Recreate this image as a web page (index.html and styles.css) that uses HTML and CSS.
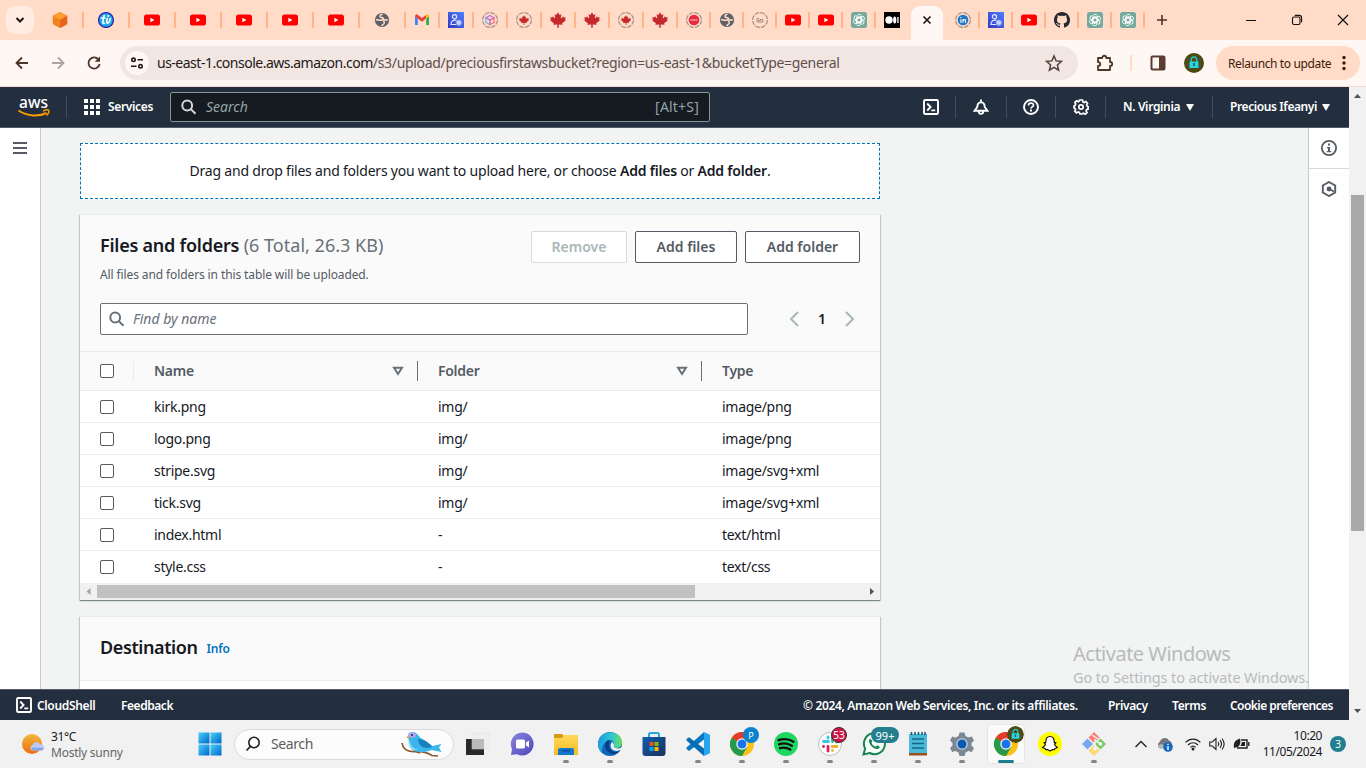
FILE: index.html
```
<!DOCTYPE html>
<html lang="en">
<head>
<meta charset="utf-8">
<title>Upload objects</title>
<link rel="stylesheet" href="styles.css">
</head>
<body>
<svg class="defs" width="0" height="0">
<defs>
<linearGradient id="gBlue" x1="0" y1="0" x2="1" y2="1"><stop offset="0" stop-color="#48d0fb"/><stop offset="1" stop-color="#0067c8"/></linearGradient>
<linearGradient id="gUser" x1="0" y1="1" x2="1" y2="0"><stop offset="0" stop-color="#3239c4"/><stop offset="1" stop-color="#5080ff"/></linearGradient>
<linearGradient id="gSun" x1="0" y1="0" x2="0" y2="1"><stop offset="0" stop-color="#f2b93b"/><stop offset="1" stop-color="#ee6a13"/></linearGradient>
<linearGradient id="gPurple" x1="0" y1="0" x2="1" y2="1"><stop offset="0" stop-color="#8a84de"/><stop offset="1" stop-color="#4d47b8"/></linearGradient>
<linearGradient id="gEdge" x1="0" y1="0" x2="1" y2="0"><stop offset="0" stop-color="#1b9de2"/><stop offset=".6" stop-color="#33c6cf"/><stop offset="1" stop-color="#6fe04a"/></linearGradient>
<linearGradient id="gFolder" x1="0" y1="0" x2="0" y2="1"><stop offset="0" stop-color="#ffd95c"/><stop offset="1" stop-color="#f7ba26"/></linearGradient>
<linearGradient id="gStore" x1="0" y1="0" x2="1" y2="1"><stop offset="0" stop-color="#0f5fae"/><stop offset="1" stop-color="#1c2f5c"/></linearGradient>
<symbol id="yt" viewBox="0 0 16 16"><rect y="2.500" width="16" height="11" rx="2.600" fill="#f00"/><path d="M6.400 5.700v4.600L10.400 8z" fill="#fff"/></symbol>
<symbol id="cube" viewBox="0 0 16 16"><path d="M8 0l7.200 3.800v8.400L8 16 .8 12.200V3.800z" fill="#f58220"/><path d="M8 0l7.200 3.800L8 7.800.8 3.800z" fill="#ff9d2e"/><path d="M8 7.800l7.200-4v8.400L8 16z" fill="#e8641b"/></symbol>
<symbol id="tl" viewBox="0 0 16 16"><circle cx="8" cy="8" r="7.400" fill="#20a8e8" stroke="#2a27b5" stroke-width="1.300"/><path d="M6.200 3.500L4.800 10q-.2 1.800 1.500 1.200M3.200 6h3.800M9.300 6.500L8.600 9.800q0 1.700 1.400 1.200 1.800-.8 2.300-4.500" fill="none" stroke="#fff" stroke-width="1.600" stroke-linecap="round"/><circle cx="10.200" cy="4" r="1" fill="#fff"/></symbol>
<symbol id="globe" viewBox="0 0 16 16"><circle cx="8" cy="8" r="7.100" fill="#5f6368"/><path d="M8.500 2.300C6.200 2.800 5.500 4 6.300 5c.9.900 3 .4 3.200 1.700.1 1.300-1.500 1.400-3.100 1.500-1.700.1-2.300-.7-4.300-.3" fill="none" stroke="#ffdbc8" stroke-width="1.600"/><path d="M13.800 8.200c-1.300-.6-3.200-.5-3.900.4-.6 1 .7 1.500.3 2.600-.4.900-1.600 1.500-2.700 2.500" fill="none" stroke="#ffdbc8" stroke-width="1.500"/></symbol>
<symbol id="gmail" viewBox="0 0 16 16"><path d="M1 3.500v9.500h2.800V6.500z" fill="#4285f4"/><path d="M15 3.500v9.500h-2.800V6.500z" fill="#34a853"/><path d="M1 4.500C1 2.500 3 2.200 4 3l4 3 4-3v3.500L8 9.700 3.800 6.600z" fill="#ea4335"/><path d="M12.200 3c1.300-.9 2.800-.2 2.800 1.500l-2.800 2.300z" fill="#fbbc04"/></symbol>
<symbol id="user" viewBox="0 0 16 16"><path fill="url(#gUser)" d="M0 0h16v16H0z"/><circle cx="6.500" cy="4.700" r="2.100" fill="none" stroke="#e1e6ff" stroke-width="1.200"/><path d="M8.500 8.500c-3-1-5.500.5-5.500 4h5" fill="none" stroke="#e1e6ff" stroke-width="1.200"/><circle cx="10.800" cy="10.700" r="2.700" fill="#c8d2ff" stroke="#8c9cf5"/></symbol>
<symbol id="ring" viewBox="0 0 16 16"><circle cx="8" cy="8" r="7.400" fill="none" stroke="#a79184" stroke-width="1.200" stroke-dasharray="4.700 1.110"/></symbol>
<symbol id="leaf" viewBox="0 0 16 16"><path d="M8 .3L9.600 3l1.800-.8-.7 3.800.6.200 1.800-1.900.6 1.300 2.200-.3-.9 2.300.9.700-3.700 3 .4 1.500-3.900-.4.100 3.300H7.200l.1-3.300-3.900.4.400-1.500L.1 8.300 1 7.600.1 5.300l2.200.3.600-1.300 1.800 1.900.600-.2-.7-3.800L6.400 3z" fill="#c5282b"/></symbol>
<symbol id="gpt" viewBox="0 0 16 16"><rect width="16" height="16" rx="2.500" fill="#74aa9c"/><g fill="none" stroke="#fff" stroke-width=".9"><path id="petal" d="M6 9.300V4.700a2.400 2.400 0 014.400-1.300M6.200 4.200l4.200 2.500v3.800"/><use href="#petal" transform="rotate(60 8 8)"/><use href="#petal" transform="rotate(120 8 8)"/><use href="#petal" transform="rotate(180 8 8)"/><use href="#petal" transform="rotate(240 8 8)"/><use href="#petal" transform="rotate(300 8 8)"/></g></symbol>
<symbol id="medium" viewBox="0 0 16 16"><path d="M0 0h16v16H0z"/><circle cx="5" cy="8" r="3.700" fill="#fff"/><ellipse cx="10.700" cy="8" rx="1.600" ry="3.500" fill="#fff"/><path d="M13.300 5h1.300v6h-1.300z" fill="#fff"/></symbol>
<symbol id="github" viewBox="0 0 16 16"><path fill="#24292f" d="M8 0C3.580 0 0 3.580 0 8c0 3.540 2.290 6.530 5.470 7.590.4.070.55-.17.55-.38 0-.19-.01-.82-.01-1.490-2.010.37-2.530-.49-2.690-.94-.09-.23-.48-.94-.82-1.130-.28-.15-.68-.52-.01-.53.63-.01 1.080.58 1.230.82.72 1.210 1.870.87 2.330.66.07-.52.28-.87.51-1.070-1.780-.2-3.640-.89-3.640-3.950 0-.87.31-1.590.82-2.150-.08-.2-.36-1.020.08-2.120 0 0 .67-.21 2.200.82.640-.18 1.320-.27 2-.27s1.360.09 2 .27c1.530-1.040 2.200-.82 2.200-.82.44 1.100.16 1.920.08 2.120.51.56.82 1.270.82 2.150 0 3.070-1.870 3.750-3.650 3.950.29.25.54.73.54 1.480 0 1.070-.01 1.930-.01 2.200 0 .21.15.46.55.38A8.010 8.010 0 0016 8c0-4.420-3.580-8-8-8z"/></symbol>
<symbol id="shell" viewBox="0 0 16 16"><g fill="none" stroke="#fff" stroke-width="1.900"><rect x="1" y="1" width="14" height="14" rx="1.300"/><path d="M4.200 4.500L7.600 8l-3.400 3.500M8.300 11.400h3.900" stroke-width="1.800"/></g></symbol>
<symbol id="mag" viewBox="0 0 16 16"><g fill="none" stroke="currentColor" stroke-width="2"><circle cx="6.200" cy="6.500" r="4.900"/><path d="M9.800 10.100L14.500 14.800"/></g></symbol>
<symbol id="chrome" viewBox="0 0 24 24"><circle cx="12" cy="12" r="12" fill="#fbc116"/><path d="M12 12L1.600 6A12 12 0 0122.400 6z" fill="#e33b2e"/><path d="M1.600 6A12 12 0 0012 24l5.200-9L12 12z" fill="#269a4a"/><path d="M12 6.500h10.700L12 12z" fill="#e33b2e"/><path d="M1.600 6l5.600 9 4.800-3z" fill="#269a4a"/><circle cx="12" cy="12" r="5.700" fill="#fff"/><circle cx="12" cy="12" r="4.500" fill="#1a73e8"/></symbol>
<symbol id="lock" viewBox="0 0 20 20"><circle cx="10" cy="10" r="10" fill="#4d4a0c"/><path d="M3 5l2 2M2 11l2 1M15 5l2 2M15 14l2-2M5 16h2" stroke="#4b477f" stroke-width="1.500"/><path d="M7.300 9V6.700a2.700 2.700 0 015.400 0V9" fill="none" stroke="#21c3cf" stroke-width="1.400"/><path d="M5.500 8.500h9V15h-9z" fill="#25d7e2"/><path d="M9.200 10h1.600v3H9.200z" fill="#33533e"/></symbol>
</defs>
</svg>

<header class="tabstrip">
  <div class="tabsearch"><svg width="10" height="8" viewBox="0 0 10 8"><path d="M1.500 2L5 5.500 8.500 2" fill="none" stroke="#241712" stroke-width="2"/></svg></div>
  <div class="tab wide"><svg><use href="#cube"/></svg></div>
  <div class="tab wide"><svg><use href="#tl"/></svg></div>
  <div class="tab wide"><svg><use href="#yt"/></svg></div>
  <div class="tab wide"><svg><use href="#yt"/></svg></div>
  <div class="tab wide"><svg><use href="#yt"/></svg></div>
  <div class="tab wide"><svg><use href="#yt"/></svg></div>
  <div class="tab wide"><svg><use href="#yt"/></svg></div>
  <div class="tab wide"><svg><use href="#globe"/></svg></div>
  <div class="tab mid"><svg><use href="#gmail"/></svg></div>
  <div class="tab mid"><svg><use href="#user"/></svg></div>
  <div class="tab mid"><svg viewBox="0 0 16 16"><use href="#ring"/><g fill="none" stroke-width="1.200"><path d="M8 8L4 5.800v4.600l4 2.300z" stroke="#62b7ef"/><path d="M8 3.500l4 2.300L8 8 4 5.800z" stroke="#ae78e5"/><path d="M8 8l4-2.200v4.600l-4 2.300z" stroke="#f1698e"/></g></svg></div>
  <div class="tab mid"><svg viewBox="0 0 16 16"><use href="#ring"/><use href="#leaf" x="3" y="3" width="10" height="10"/></svg></div>
  <div class="tab mid"><svg><use href="#leaf"/></svg></div>
  <div class="tab mid"><svg><use href="#leaf"/></svg></div>
  <div class="tab mid"><svg viewBox="0 0 16 16"><use href="#ring"/><use href="#leaf" x="3" y="3" width="10" height="10"/></svg></div>
  <div class="tab mid"><svg><use href="#leaf"/></svg></div>
  <div class="tab"><svg viewBox="0 0 16 16"><use href="#ring"/><circle cx="8" cy="8" r="5.300" fill="#e52b3d"/><path d="M4.500 8h7" stroke="#f9c2c5" stroke-width="1.700" stroke-dasharray="1.200 .5"/></svg></div>
  <div class="tab"><svg><use href="#globe"/></svg></div>
  <div class="tab"><svg viewBox="0 0 16 16"><use href="#ring"/><path d="M5 6.500h2l1 1h3v2.500H5zM6 8.500h3" fill="none" stroke="#a79184"/></svg></div>
  <div class="tab"><svg><use href="#yt"/></svg></div>
  <div class="tab"><svg><use href="#yt"/></svg></div>
  <div class="tab"><svg><use href="#gpt"/></svg></div>
  <div class="tab last"><svg><use href="#medium"/></svg></div>
  <div class="tab active"><svg viewBox="0 0 16 16"><path d="M4.500 4.500l7 7M11.500 4.500l-7 7" stroke="#241712" stroke-width="1.700"/></svg></div>
  <div class="tab"><svg viewBox="0 0 16 16"><use href="#ring"/><circle cx="8" cy="8" r="5.300" fill="#2078c8"/><path d="M5.900 7.200v3.500M8 10.700V7.200M8 8.800c.2-1.600 2.600-1.700 2.600.3v1.600" stroke="#fff" stroke-width="1.100" fill="none"/><circle cx="5.900" cy="5.600" r=".7" fill="#fff"/></svg></div>
  <div class="tab"><svg><use href="#user"/></svg></div>
  <div class="tab"><svg><use href="#yt"/></svg></div>
  <div class="tab"><svg><use href="#github"/></svg></div>
  <div class="tab"><svg><use href="#gpt"/></svg></div>
  <div class="tab"><svg><use href="#gpt"/></svg></div>
  <div class="newtab"><svg width="12" height="12" viewBox="0 0 12 12"><path d="M6 1v10M1 6h10" stroke="#4f3529" stroke-width="1.600"/></svg></div>
  <div class="winbtns">
    <svg width="12" height="12" viewBox="0 0 12 12"><path d="M1 6.500h10" stroke="#111"/></svg>
    <svg width="12" height="12" viewBox="0 0 12 12"><rect x="1.500" y="3" width="7.500" height="7.500" rx="1.500" fill="none" stroke="#111" stroke-width="1.100"/><path d="M3.800 1.400h4.400c1.500 0 2.400.9 2.400 2.400v4.400" fill="none" stroke="#111" stroke-width="1.100"/></svg>
    <svg width="12" height="12" viewBox="0 0 12 12"><path d="M1 1l10 10M11 1L1 11" stroke="#111" stroke-width="1.200"/></svg>
  </div>
</header>

<div class="toolbar">
  <div class="nav">
    <svg width="16" height="16" viewBox="0 0 16 16"><path d="M14 8H3M8 2.500L2.500 8 8 13.500" fill="none" stroke="#4f3529" stroke-width="1.800"/></svg>
    <svg width="16" height="16" viewBox="0 0 16 16"><path d="M2 8h11M8 2.500L13.500 8 8 13.500" fill="none" stroke="#b0a29c" stroke-width="1.800"/></svg>
    <svg width="16" height="16" viewBox="0 0 16 16"><path d="M12.800 5A5.600 5.600 0 1013.600 9" fill="none" stroke="#4f3529" stroke-width="1.800"/><path d="M14 1.500v5.300H8.700z" fill="#4f3529"/></svg>
  </div>
  <div class="omnibox">
    <span class="tune"><svg width="14" height="14" viewBox="0 0 14 14"><g fill="none" stroke="#241712" stroke-width="1.600"><circle cx="3.500" cy="3.800" r="1.700"/><path d="M7.500 3.800H13M1 10.200h5.500"/><circle cx="10.500" cy="10.200" r="1.700"/></g></svg></span>
    <span class="url"><b>us-east-1.console.aws.amazon.com</b><i>/s3/upload/preciousfirstawsbucket?region=us-east-1&amp;bucketType=general</i></span>
    <svg width="18" height="18" viewBox="0 0 18 18"><path d="M9 2l2.100 4.900 5.300.5-4 3.500 1.200 5.200L9 13.400l-4.600 2.700 1.200-5.200-4-3.500 5.300-.5z" fill="none" stroke="#51413a" stroke-width="1.500"/></svg>
  </div>
  <svg class="ext" width="18" height="18" viewBox="0 0 18 18"><path d="M2 4h4.200c0-3 4-3 4 0H14v4c3 0 3 4 0 4v4H2v-4c3 0 3-4 0-4z" fill="none" stroke="#4f3529" stroke-width="1.800" stroke-linejoin="round"/></svg>
  <span class="tsep"></span>
  <svg class="panel" width="16" height="16" viewBox="0 0 16 16"><rect x="1.500" y="1.500" width="13" height="13" rx="1" fill="none" stroke="#5a3d2f" stroke-width="2"/><path d="M9 1h6v14H9z" fill="#5a3d2f"/></svg>
  <svg class="avatar" width="20" height="20"><use href="#lock"/></svg>
  <div class="relaunch"><span>Relaunch to update</span><svg width="4" height="16" viewBox="0 0 4 16"><g fill="#3b1a0c"><circle cx="2" cy="2.500" r="1.700"/><circle cx="2" cy="8" r="1.700"/><circle cx="2" cy="13.500" r="1.700"/></g></svg></div>
</div>

<div class="viewport">
<div class="page">
  <nav class="awsnav">
    <svg class="awslogo" width="32" height="24" viewBox="0 0 32 24"><text x="1" y="13" class="awstext" textLength="29" lengthAdjust="spacingAndGlyphs">aws</text><path d="M.5 15.500c9 6 20 6.500 28 2.500" fill="none" stroke="#f90" stroke-width="2"/><path d="M25 16.200c3-1.500 5.200-1.500 5.700-.7.500 1-.5 3.300-2 5" fill="none" stroke="#f90" stroke-width="1.500"/></svg>
    <span class="vsep s1"></span>
    <svg class="grid" width="16" height="16" viewBox="0 0 16 16"><path fill="#fff" d="M0 0h4v4H0zM6 0h4v4H6zM12 0h4v4h-4zM0 6h4v4H0zM6 6h4v4H6zM12 6h4v4h-4zM0 12h4v4H0zM6 12h4v4H6zM12 12h4v4h-4z"/></svg>
    <span class="services">Services</span>
    <div class="gsearch"><svg width="16" height="16"><use href="#mag"/></svg><em>Search</em><span>[Alt+S]</span></div>
    <div class="tools">
      <div class="tool"><svg width="16" height="16"><use href="#shell"/></svg></div>
      <div class="tool w51"><svg width="16" height="16" viewBox="0 0 16 16"><path d="M8 .5V3M4.300 8C4.300 1.800 11.700 1.800 11.700 8L14.500 11.800h-13zM5.700 12.500c.3 3.200 4.300 3.200 4.600 0" fill="none" stroke="#fff" stroke-width="1.900"/></svg></div>
      <div class="tool w49"><svg width="16" height="16" viewBox="0 0 16 16"><circle cx="8" cy="8" r="7" fill="none" stroke="#fff" stroke-width="1.900"/><path d="M5.500 6.400c0-3 5-3 5-.2 0 1.700-2.500 1.700-2.500 3.300" fill="none" stroke="#fff" stroke-width="1.700"/><path d="M7 10.600h2v1.800H7z" fill="#fff"/></svg></div>
      <div class="tool"><svg width="16" height="16" viewBox="0 0 16 16"><circle cx="8" cy="8" r="2.200" fill="none" stroke="#fff" stroke-width="1.700"/><path d="M6.500 1h3l.4 1.900 1.300.6 1.700-1 1.600 1.800-.9 1.600.5 1.300 1 .4v2.500l-1.500.6-.5 1.300.9 1.500-1.800 1.800-1.600-1-1.300.5L9.100 15H6.900l-.5-1.600-1.300-.5-1.600 1-1.800-1.800.9-1.500-.5-1.300L1 8.900V7l1.200-.7.500-1.300-.9-1.600 1.700-1.600 1.600 1 1-.6z" fill="none" stroke="#fff" stroke-width="1.700"/></svg></div>
      <div class="tool region"><span>N. Virginia</span><i class="caret"></i></div>
      <div class="tool account"><span>Precious Ifeanyi</span><i class="caret"></i></div>
    </div>
  </nav>
  <div class="body">
    <aside class="left"><svg width="14" height="12" viewBox="0 0 14 12"><path d="M0 1h14M0 6h14M0 11h14" stroke="#545b64" stroke-width="2"/></svg></aside>
    <main class="content">
      <div class="drop"><p>Drag and drop files and folders you want to upload here, or choose <b>Add files</b> or <b>Add folder</b>.</p></div>
      <section class="card files">
        <div class="cardhead">
          <div class="toprow">
            <div class="titles"><h2>Files and folders <span>(6 Total, 26.3 KB)</span></h2><p>All files and folders in this table will be uploaded.</p></div>
            <div class="btns"><button class="off">Remove</button><button class="af">Add files</button><button class="ad">Add folder</button></div>
          </div>
          <div class="findrow">
            <div class="find"><svg width="16" height="16"><use href="#mag"/></svg><em>Find by name</em></div>
            <div class="pager"><svg width="10" height="16" viewBox="0 0 10 16"><path d="M9 1L2 8l7 7" fill="none" stroke="#aab7b8" stroke-width="2"/></svg><b>1</b><svg width="10" height="16" viewBox="0 0 10 16"><path d="M1 1l7 7-7 7" fill="none" stroke="#aab7b8" stroke-width="2"/></svg></div>
          </div>
        </div>
        <div class="row th"><div class="ck"><i></i></div><div class="c1">Name<svg width="12" height="10" viewBox="0 0 12 10"><path d="M2 1.800h8L6 8z" fill="none" stroke="#687078" stroke-width="2"/></svg></div><div class="c2">Folder<svg width="12" height="10" viewBox="0 0 12 10"><path d="M2 1.800h8L6 8z" fill="none" stroke="#687078" stroke-width="2"/></svg></div><div class="c3">Type</div></div>
        <div class="row"><div class="ck"><i></i></div><div class="c1">kirk.png</div><div class="c2">img/</div><div class="c3">image/png</div></div>
        <div class="row"><div class="ck"><i></i></div><div class="c1">logo.png</div><div class="c2">img/</div><div class="c3">image/png</div></div>
        <div class="row"><div class="ck"><i></i></div><div class="c1">stripe.svg</div><div class="c2">img/</div><div class="c3">image/svg+xml</div></div>
        <div class="row"><div class="ck"><i></i></div><div class="c1">tick.svg</div><div class="c2">img/</div><div class="c3">image/svg+xml</div></div>
        <div class="row"><div class="ck"><i></i></div><div class="c1">index.html</div><div class="c2">-</div><div class="c3">text/html</div></div>
        <div class="row end"><div class="ck"><i></i></div><div class="c1">style.css</div><div class="c2">-</div><div class="c3">text/css</div></div>
        <div class="hscroll"><svg width="17" height="17" viewBox="0 0 17 17"><path d="M10.500 5v7L6.500 8.500z" fill="#a3a3a3"/></svg><i></i><svg width="17" height="17" viewBox="0 0 17 17"><path d="M7 5v7l4-3.500z" fill="#505050"/></svg></div>
      </section>
      <section class="card dest"><div class="desthead"><h2>Destination</h2><a>Info</a></div></section>
      <div class="watermark"><strong>Activate Windows</strong><span>Go to Settings to activate Windows.</span></div>
    </main>
    <aside class="right">
      <div><svg width="16" height="16" viewBox="0 0 16 16"><circle cx="8" cy="8" r="7.100" fill="none" stroke="#545b64" stroke-width="1.800"/><path d="M7 3.500h2v2H7zM6 7h3v4h1.200v1.200H5.800V11H7V8.200H6z" fill="#545b64"/></svg></div>
      <div><svg width="16" height="16" viewBox="0 0 16 16"><path d="M8 1l6.200 3.500v7L8 15l-6.200-3.500v-7z" fill="none" stroke="#545b64" stroke-width="1.900"/><circle cx="8" cy="8" r="2.400" fill="#545b64"/><path d="M8 8l5 2.500" stroke="#545b64" stroke-width="1.700"/></svg></div>
    </aside>
  </div>
  <footer class="foot"><svg width="16" height="16"><use href="#shell"/></svg><span class="f1">CloudShell</span><span class="f2">Feedback</span><span class="f3">© 2024, Amazon Web Services, Inc. or its affiliates.</span><span class="f4">Privacy</span><span class="f5">Terms</span><span class="f6">Cookie preferences</span></footer>
</div>
<div class="vscroll"><svg width="17" height="17" viewBox="0 0 17 17"><path d="M5 11h7L8.500 7z" fill="#505050"/></svg><i></i><svg width="17" height="17" viewBox="0 0 17 17"><path d="M5 6h7l-3.500 4z" fill="#505050"/></svg></div>
</div>

<div class="taskbar">
  <div class="weather"><svg width="24" height="22" viewBox="0 0 24 22"><circle cx="11" cy="11" r="10" fill="url(#gSun)"/><path d="M11 17.500a3 3 0 01.5-5.500 4 4 0 017.500-.500 3 3 0 012 6z" fill="#bccbf5"/><path d="M11 17.500a3 3 0 010-3c3 1 7-.5 11.500.5a3 3 0 01-2 2.500z" fill="#89a5e4"/></svg><div><span class="deg">31°C</span><span class="cond">Mostly sunny</span></div></div>
  <svg class="start" width="24" height="24" viewBox="0 0 24 24"><g fill="url(#gBlue)"><path d="M.5.500h11v11H.500z"/><path d="M12.500.500h11v11h-11z"/><path d="M.5 12.500h11v11H.500z"/><path d="M12.500 12.500h11v11h-11z"/></g></svg>
  <div class="tsearch"><svg width="16" height="16" viewBox="0 0 16 16"><g fill="none" stroke="#222" stroke-width="1.600"><circle cx="9" cy="6.500" r="5.200"/><path d="M5.400 10.400L1.500 14.500"/></g></svg><span>Search</span>
  <svg class="bird" width="42" height="26" viewBox="0 0 42 26"><path d="M1 12c1 7 6 9 13 8.500 8-.5 12 1 17 4l6 .5M14 20.500l5 1.500" fill="none" stroke="#8b5a31" stroke-width="1.700"/><path d="M7 5.500C7 .8 12-.2 15.500 2.500c2 1.500 2.500 3.500 5 5 5 2.500 8 5 11 7.500l9-2-2.500 3.500 2.500 4.500-10-2c-9 3.500-19 3-22-4-1.500-3.500 0-5-1.500-9.500z" fill="#3cb6ea"/><path d="M7 6C6 .5 14-.5 15 4c0 3-4 3-6 2z" fill="#b2a4f0"/><path d="M17 8c6 0 11 4 14 8-6 2.500-14 0-14-8z" fill="#1a7fc0"/><path d="M9 9c0 6 4 9 8 10-6 1-11-4-8-10z" fill="#8fdcf5"/><path d="M7.500 4.500L5 7l3.500.3z" fill="#e5a72c"/><circle cx="11" cy="4" r="1" fill="#14285f"/></svg></div>
  <div class="apps">
    <div class="app"><svg width="24" height="24" viewBox="0 0 24 24"><path d="M0 7h18v16H0z" fill="#292929"/><path d="M6 1h18v16H6z" fill="#eee" stroke="#ddd" stroke-width=".5"/><path d="M6 7h12v10H6z" fill="#bbb"/></svg></div>
    <div class="app"><svg width="24" height="24" viewBox="0 0 24 24"><path d="M12 .500a11.500 11.500 0 11-5 21.800L1 23l1-6A11.500 11.500 0 0112 .500z" fill="url(#gPurple)"/><rect x="6" y="7.500" width="9" height="9" rx="1.500" fill="#fff"/><path d="M16 10.500l3-2v7l-3-2z" fill="#fff"/></svg></div>
    <div class="app run"><svg width="24" height="24" viewBox="0 0 24 24"><path d="M0 2h8l2 2v5H0z" fill="#d99b0b"/><path d="M0 6h8l2-3h14v20H0z" fill="url(#gFolder)"/><path d="M4 23v-5q0-2 2-2h12q2 0 2 2v5z" fill="#1478ca"/><path d="M8 18h8v1.500H8z" fill="#094f9b"/></svg></div>
    <div class="app run"><svg width="24" height="24" viewBox="0 0 24 24"><circle cx="12" cy="12" r="12" fill="#1165b7"/><path d="M0 12C1-4 24-3 24 11c0 5-6 6-9 4 2-2 1-7-3-7-5 0-8 5-8 12-3-2-4-5-4-8z" fill="url(#gEdge)"/><path d="M12 8c-4 0-6 5-4 9 2 5 9 7 14 2-4 2-10 1-11-4-.5-3 0-5 1-7z" fill="#063f85"/><path d="M14 10c-3 4-1 9 5 9l4.500-1.500 1-3.500c-2 3-6 3-9 1 .8-1.500.5-4-1.500-5z" fill="#f1f1f1"/></svg></div>
    <div class="app"><svg width="24" height="24" viewBox="0 0 24 24"><path d="M7 7V2.500Q7 1 8.500 1h7Q17 1 17 2.500V7" fill="none" stroke="#26a7e3" stroke-width="2"/><path d="M.5 5h23v16q0 3-3 3h-17q-3 0-3-3z" fill="url(#gStore)"/><path d="M7.500 10h4v4h-4z" fill="#f25022"/><path d="M12.500 10h4v4h-4z" fill="#7fba00"/><path d="M7.500 15h4v4h-4z" fill="#00a4ef"/><path d="M12.500 15h4v4h-4z" fill="#ffb900"/></svg></div>
    <div class="app run"><svg width="24" height="24" viewBox="0 0 24 24"><path d="M18 0v7.500L3 19 .5 17v-1.500z" fill="#0878c4"/><path d="M.5 8.500V7L3 5.200 18 16.500V24z" fill="#066cb5"/><path d="M18 0l6 2.800v18.400L18 24z" fill="#28a5ef"/></svg></div>
    <div class="app run"><svg width="24" height="24"><use href="#chrome"/></svg><span class="badge p">P</span></div>
    <div class="app run"><svg width="24" height="24" viewBox="0 0 24 24"><circle cx="12" cy="12" r="12" fill="#1ed760"/><path d="M4.500 8.200c5-1.600 11-1 15 1.500M5 12.300c4-1.300 9.500-.6 12.800 1.500M6 16.200c3.500-1 7-.5 10.300 1.400" fill="none" stroke="#111" stroke-width="2.300" stroke-linecap="round"/></svg></div>
    <div class="app run"><svg width="24" height="24" viewBox="0 0 24 24"><circle cx="12" cy="12" r="11.500" fill="#fff" stroke="#bbb"/><g fill="none" stroke-width="2.800" stroke-linecap="round"><path d="M5.500 9.500h5M10 5v1" stroke="#36c5f0"/><path d="M14.500 5.500v4M18.500 10v.1" stroke="#2eb67d"/><path d="M14 14.500h5M14.500 18.500v.1" stroke="#ecb22e"/><path d="M10 14.500v4.500M5.500 14.500h.1" stroke="#e01e5a"/></g></svg><span class="badge n53">53</span></div>
    <div class="app run"><svg width="24" height="24" viewBox="0 0 24 24"><path d="M1.500 22.500l1.600-6A10.500 10.500 0 117.600 21z" fill="#f6fffa" stroke="#188450" stroke-width="2"/><path d="M8 6.500c-4 4 5 13.500 9.500 9.500 1-1-1-2.500-2.500-2.500l-1.500 1.200c-2-.7-3.500-2.200-4-4L10.500 9z" fill="#188450"/></svg><span class="badge n99">99+</span></div>
    <div class="app run"><svg width="24" height="24" viewBox="0 0 24 24"><path d="M3 2h18v19H3z" fill="#4bb9d9"/><path d="M3 21h18v2.500H3z" fill="#9b501d"/><path d="M5.500 0v3M9 0v3M12.500 0v3M16 0v3M19 0v3" stroke="#14566c" stroke-width="1.500"/><path d="M6 7h12M6 11.500h12M6 16h12" stroke="#126887" stroke-width="1.500"/></svg></div>
    <div class="app run"><svg width="24" height="24" viewBox="0 0 24 24"><path d="M9.500.500h5l1 3.500 3 1.500 3.300-1 2.200 4-2.500 2.500v2.500l2.500 2.500-2.200 4-3.300-1-3 1.500-1 3.500h-5l-1-3.500-3-1.500-3.300 1L0 16l2.500-2.500V11L0 8.500l2.200-4 3.300 1L8.500 4z" fill="#7b8791"/><circle cx="12" cy="12" r="5.800" fill="#c5d3df"/><circle cx="12" cy="12" r="4.500" fill="#075ab2"/></svg></div>
    <div class="app cur"><svg width="24" height="24"><use href="#chrome"/></svg><svg class="badge lk" width="17" height="17"><use href="#lock"/></svg></div>
    <div class="app"><svg width="24" height="24" viewBox="0 0 24 24"><circle cx="12" cy="12" r="12" fill="#fffc00"/><path d="M12 4.500c-3 0-4.300 2-4.200 5.800l-1.800.2 1.500 1.700c-.3 1.500-1.500 2.500-3 3.300l2.500 1 .8 1.200h2l2.200 1.300 2.200-1.300h2l.8-1.200 2.500-1c-1.500-.8-2.700-1.800-3-3.300l1.500-1.700-1.800-.2c.1-3.800-1.200-5.800-4.200-5.800z" fill="#fff" stroke="#111" stroke-width="1.200" stroke-linejoin="round"/></svg></div>
    <div class="app run"><svg width="24" height="24" viewBox="0 0 24 24"><path d="M12 0l5.500 5.500L12 11 6.500 5.500z" fill="#fb7d77"/><path d="M5.500 6.500L11 12l-5.500 5.500L0 12z" fill="#77a8f3"/><path d="M18.500 6.500L24 12l-5.500 5.500L13 12z" fill="#77ca62"/><path d="M12 13l5.500 5.500L12 24l-5.500-5.500z" fill="#ffd66f"/><path d="M10 3l6 4M13 7v10M14 9l5 3" fill="none" stroke="#e9f2e8" stroke-width="1.500"/><circle cx="13" cy="17" r="1.800" fill="#fff"/><circle cx="18.500" cy="12" r="1.800" fill="#fff"/></svg></div>
  </div>
  <div class="tray">
    <svg width="12" height="8" viewBox="0 0 12 8"><path d="M.5 7L6 1.500 11.500 7" fill="none" stroke="#222" stroke-width="1.400"/></svg>
    <svg class="cloud" width="17" height="16" viewBox="0 0 17 16"><path d="M4 12.500a4 4 0 010-7c1-4 7-5 9-1 3 1 3 4 2 6z" fill="#74777b"/><path d="M1.500 10c3-3 7-2 9 2.500H4z" fill="#b2b5b8"/><circle cx="12" cy="11" r="4.800" fill="#1269bd"/><path d="M12 7.700v1.200M12 10v4" stroke="#fff" stroke-width="1.400"/></svg>
    <svg class="wifi" width="16" height="14" viewBox="0 0 16 14"><g fill="none" stroke="#222" stroke-width="1.200"><path d="M.6 5.400c4.400-4.300 10.400-4.300 14.800 0M3 8c3-3 7-3 10 0M5.300 10.400c1.700-1.700 3.700-1.700 5.400 0"/></g><circle cx="8" cy="12" r="1.500" fill="#222"/></svg>
    <svg class="vol" width="16" height="14" viewBox="0 0 16 14"><path d="M.7 5h2.600L7 1.500v11L3.300 9H.7zM9 5q1.500 2 0 4M11 3.200q3 3.800 0 7.600M13 1.500q4.300 5.500 0 11" fill="none" stroke="#222" stroke-width="1.100"/></svg>
    <svg class="bat" width="17" height="14" viewBox="0 0 17 14"><path d="M8 3h6v8H4M15.800 5v4" fill="none" stroke="#222" stroke-width="1.400"/><path d="M1 11.500C0 6 2 3 7 1.500c1.200 5-.5 9.500-5 9z" fill="#222"/><path d="M9 5h3v4H7.500z" fill="#222"/></svg>
    <div class="clock"><span class="time">10:20</span><span class="date">11/05/2024</span></div>
    <span class="count">3</span>
  </div>
</div>
</body>
</html>
```
FILE: styles.css
```
* { box-sizing: border-box; }
html, body { margin: 0; height: 768px; overflow: hidden; }
body { font-family: "Noto Sans", "Open Sans", sans-serif; font-size: 14px; color: #16191f; display: flex; flex-direction: column; width: 1366px; }
svg { display: block; flex: none; }
h2, p { margin: 0; }
.defs { position: absolute; }
span, em, a, b { white-space: nowrap; }

.tabstrip { height: 40px; background: #ffdbc8; display: flex; align-items: center; flex: none; }
.tabsearch { width: 28px; height: 28px; margin: 0 4px 0 6px; border-radius: 9px; background: #ffece2; display: flex; align-items: center; justify-content: center; }
.tab { width: 33px; height: 16px; display: flex; justify-content: center; border-right: 2px solid #ffb48a; }
.tab svg { width: 16px; height: 16px; }
.tab.mid { width: 34px; }
.tab.wide { width: 46px; }
.tab.last { border-right-color: transparent; }
.tab.active { width: 32px; height: 34px; align-self: flex-end; align-items: center; margin: 0 4px 0 2px; padding-bottom: 6px; border: 0; border-radius: 9px 9px 0 0; background: #fff7f3; }
.newtab { width: 34px; display: flex; justify-content: center; }
.winbtns { margin-left: auto; display: flex; gap: 34px; padding-right: 17px; }

.toolbar { height: 47px; flex: none; background: #fff7f3; border-bottom: 1px solid #f5dccf; display: flex; align-items: center; }
.nav { display: flex; gap: 20px; padding-left: 14px; width: 120px; }
.omnibox { width: 958px; height: 34px; border-radius: 17px; background: #f2e6e3; display: flex; align-items: center; padding: 0 15px 0 5px; }
.tune { width: 24px; height: 24px; border-radius: 50%; background: #fff7f3; display: flex; align-items: center; justify-content: center; margin-right: 8px; }
.url { flex: 1; padding-bottom: 2px; }
.url b { font-weight: 400; color: #211a17; letter-spacing: -.5px; }
.url i { font-style: normal; color: #5f4f49; letter-spacing: -.32px; }
.ext { margin-left: 18px; }
.tsep { width: 2px; height: 16px; background: #ffdbc8; margin-left: 16px; }
.panel { margin-left: 18px; }
.avatar { margin-left: 18px; }
.relaunch { margin-left: 12px; width: 144px; height: 34px; border-radius: 17px; background: #ffdbc8; display: flex; align-items: center; justify-content: space-between; padding: 0 14px 0 12px; font-size: 12px; letter-spacing: -.37px; color: #3b1a0c; }

.viewport { height: 633px; display: flex; flex: none; }
.page { width: 1349px; height: 633px; display: flex; flex-direction: column; }
.vscroll { width: 17px; background: #f1f1f1; display: flex; flex-direction: column; }
.vscroll i { display: block; width: 13px; height: 336px; margin: 91px 2px 172px; background: #a8a8a8; }
.hscroll { height: 17px; background: #f1f1f1; display: flex; }
.hscroll i { width: 598px; height: 13px; margin: 2px 168px 0 0; background: #c1c1c1; }

.awsnav { height: 41px; flex: none; background: #232f3e; border-bottom: 1px solid #545b64; display: flex; align-items: center; color: #fff; font-weight: 600; font-size: 12px; letter-spacing: -.35px; }
.awslogo { margin-left: 18px; overflow: visible; }
.awstext { font: 500 17px "Noto Sans", sans-serif; letter-spacing: 0; fill: #fff; }
.vsep { width: 1px; height: 22px; background: #414d5c; margin-left: 16px; }
.grid { margin-left: 17px; }
.services { width: 62px; margin-left: 8px; padding-bottom: 1px; }
.gsearch { width: 540px; height: 30px; border: 1px solid #879596; border-radius: 2px; background: #161a21; display: flex; align-items: center; padding: 0 10px; font-size: 14px; font-weight: 400; letter-spacing: 0; color: #95a5a6; }
.gsearch svg { color: #d5dbdb; }
.gsearch em { margin-left: 9px; flex: 1; padding-bottom: 1px; }
.gsearch span { letter-spacing: .2px; padding-bottom: 1px; }
.tools { display: flex; margin-left: 196px; align-items: center; }
.tool { width: 50px; height: 22px; display: flex; align-items: center; justify-content: center; border-right: 1px solid #414d5c; }
.w51 { width: 51px; }
.w49 { width: 49px; }
.region { width: 107px; justify-content: flex-start; padding-left: 17px; }
.region span { width: 63px; padding-bottom: 1px; }
.account { width: 130px; border: 0; justify-content: flex-start; padding-left: 17px; }
.account span { width: 92px; letter-spacing: -.4px; padding-bottom: 1px; }
.caret { border: 4.500px solid transparent; border-top: 7px solid #fff; border-bottom: 0; }

.body { flex: 1; min-height: 0; display: flex; overflow: hidden; background: #f2f3f3; }
.left { width: 41px; background: #fff; border-right: 1px solid #c4cccc; padding: 14px 13px; }
.content { flex: 1; position: relative; padding: 15px 0 0 39px; overflow: hidden; }
.right { width: 41px; background: #fff; border-left: 1px solid #c4cccc; }
.right div { height: 41px; display: flex; align-items: center; justify-content: center; border-bottom: 1px solid #d5dbdb; }
.right div + div { border: 0; height: 39px; }
.drop { width: 800px; height: 56px; border: 1px dashed #0073bb; background: #fff; display: flex; align-items: center; justify-content: center; margin-bottom: 16px; padding-bottom: 2px; letter-spacing: -.21px; }
.drop b { font-weight: 600; }
.card { width: 800px; background: #fff; box-shadow: 0 1px 1px rgba(0,28,36,.3), 1px 1px 1px rgba(0,28,36,.15), -1px 1px 1px rgba(0,28,36,.15); border-top: 1px solid #eaeded; }
.files { height: 386px; margin-bottom: 16px; margin-top: -1px; }
.cardhead { height: 137px; background: #fafafa; padding: 16px 20px 0; border-bottom: 1px solid #eaeded; }
.toprow { display: flex; justify-content: space-between; height: 71px; }
.titles h2 { font-size: 18px; line-height: 28px; font-weight: 600; letter-spacing: -.24px; }
.titles h2 span { font-weight: 400; color: #687078; letter-spacing: .02px; }
.titles p { font-size: 12px; line-height: 18px; margin-top: 7px; color: #545b64; letter-spacing: -.11px; }
.btns { display: flex; gap: 8px; }
button { height: 32px; width: 102px; padding: 0 0 1px; border: 1px solid #545b64; border-radius: 2px; background: #fff; font: 600 14px "Noto Sans", sans-serif; color: #545b64; }
button.off { width: 96px; border-color: #d5dbdb; color: #aab7b8; }
button.ad { width: 115px; }
.findrow { display: flex; align-items: center; }
.find { width: 648px; height: 32px; border: 1px solid #687078; border-radius: 2px; background: #fff; display: flex; align-items: center; padding-left: 8px; gap: 8px; color: #687078; margin-top: 1px; }
.find em { padding-bottom: 2px; }
.pager { display: flex; align-items: center; margin-left: 41px; width: 66px; justify-content: space-between; }
.pager b { font-weight: 600; padding-bottom: 1px; }
.row { height: 32px; display: flex; align-items: center; border-bottom: 1px solid #eaeded; background: #fff; letter-spacing: -.28px; }
.row.end { border: 0; }
.row > div { height: 20px; line-height: 20px; display: flex; align-items: center; }
.row.th { height: 39px; background: #fafafa; color: #545b64; font-weight: 600; }
.ck { width: 54px; padding-left: 20px; }
.ck i { width: 14px; height: 14px; border: 1px solid #545b64; border-radius: 2px; background: #fff; }
.th .ck { border-right: 1px solid #eaeded; }
.c1, .c2 { width: 284px; padding: 0 13px 0 20px; justify-content: space-between; }
.c3 { padding-left: 20px; }
.th .c1, .th .c2 { border-right: 1px solid #687078; }
.dest { height: 120px; }
.desthead { height: 64px; background: #fafafa; border-bottom: 1px solid #eaeded; display: flex; align-items: center; padding: 0 20px 4px; }
.desthead h2 { font-size: 18px; font-weight: 600; letter-spacing: -.4px; }
.desthead a { font-size: 12px; font-weight: 600; color: #0073bb; margin: 4px 0 0 9px; letter-spacing: -.2px; }
.watermark { position: absolute; left: 1032px; top: 512px; display: flex; flex-direction: column; color: #b8bbbc; width: 236px; }
.watermark strong { font-size: 20px; line-height: 28px; font-weight: 400; letter-spacing: -.5px; }
.watermark span { font-size: 14.500px; line-height: 18px; letter-spacing: -.12px; }

.foot { height: 31px; flex: none; background: #232f3e; border-top: 1px solid #545b64; display: flex; align-items: center; color: #fff; font-size: 12px; font-weight: 600; letter-spacing: -.34px; padding-left: 16px; }
.f1 { width: 84px; margin-left: 5px; }
.f2 { width: 682px; letter-spacing: -.45px; }
.f3 { width: 305px; }
.f4 { width: 64px; }
.f5 { width: 58px; }
.f6 { letter-spacing: -.54px; }

.taskbar { height: 48px; flex: none; background: #f1f1f1; display: flex; align-items: center; }
.weather { width: 198px; padding-left: 21px; display: flex; align-items: center; gap: 6px; font-size: 12px; line-height: 16px; }
.weather span { display: block; }
.weather div { padding-top: 1px; }
.deg { letter-spacing: -.4px; }
.cond { color: #666; letter-spacing: -.25px; }
.start { margin-right: 12px; }
.tsearch { width: 220px; height: 31px; border: 1px solid #dadada; border-radius: 16px; background: #fcfcfc; display: flex; align-items: center; padding: 0 10px; color: #5d5d5d; letter-spacing: -.4px; }
.tsearch span { margin-left: 10px; flex: 1; padding-bottom: 1px; }
.apps { display: flex; margin-left: 2px; }
.app { width: 44px; height: 48px; display: flex; align-items: center; justify-content: center; position: relative; }
.app.run::after, .app.cur::after { content: ""; position: absolute; left: 19px; top: 40px; width: 6px; height: 3px; border-radius: 2px; background: #858585; }
.app.cur { background: #fafafa; box-shadow: inset 0 0 0 1px #e4e4e4; height: 40px; width: 38px; margin: 4px 3px; border-radius: 4px; }
.app.cur::after { left: 11px; top: 36px; width: 16px; background: #1d7c8d; }
.badge { position: absolute; color: #fff; display: flex; align-items: center; justify-content: center; font-size: 10px; border-radius: 10px; height: 16px; }
.badge.p { left: 23px; top: 7px; width: 16px; background: #0a82cc; font-size: 9px; }
.badge.n53 { left: 23px; top: 7px; width: 16px; background: #cb1545; border: 1px solid #472335; }
.badge.n99 { left: 19px; top: 7px; width: 28px; background: #237f8d; font-size: 11px; z-index: 2; }
.badge.lk { left: 20px; top: 2px; height: 17px; }
.tray { display: flex; align-items: center; margin-left: 19px; flex: 1; }
.cloud { margin-left: 9px; }
.wifi { margin-left: 12px; }
.vol { margin-left: 8px; }
.bat { margin-left: 8px; }
.clock { width: 72px; font-size: 12px; line-height: 16px; text-align: right; letter-spacing: -.45px; }
.clock span { display: block; }
.count { width: 16px; height: 16px; border-radius: 8px; background: #237f8d; color: #fff; font-size: 10px; line-height: 16px; text-align: center; margin-left: 8px; }
```
